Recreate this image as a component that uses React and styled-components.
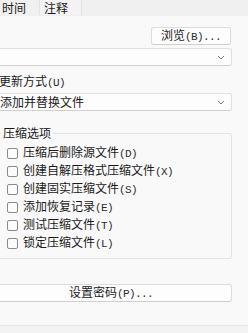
import styled, { createGlobalStyle } from "styled-components";

const GlobalStyle = createGlobalStyle`
  html, body {
    margin: 0;
    padding: 0;
    background: #f9f9f9;
  }
  body {
    width: 248px;
    height: 333px;
    overflow: hidden;
    font-family: "Noto Sans CJK SC", "Liberation Sans", sans-serif;
    font-size: 12px;
    color: #1a1a1a;
  }
`;

const Page = styled.div`
  width: 248px;
  height: 333px;
  display: flex;
  flex-direction: column;
  overflow: hidden;
`;

const TabBar = styled.div`
  height: 15px;
  display: flex;
  background: #f0f0f0;
  border-bottom: 1px solid #f0f0f0;
`;

const Tab = styled.div`
  width: ${({ w }) => w}px;
  line-height: 15px;
  padding-left: ${({ pl }) => pl}px;
  box-sizing: border-box;
  border-right: 1px solid #e3e3e3;
  background: ${({ active }) => (active ? "#f3f3f3" : "#f0f0f0")};
  font-size: 12px;
`;

const Body = styled.div`
  flex: 1;
  display: flex;
  flex-direction: column;
  padding: 11px 16px 0 0;
`;

const ButtonRow = styled.div`
  display: flex;
  justify-content: flex-end;
  padding-right: 1px;
`;

const Button = styled.div`
  height: 18px;
  width: ${({ w }) => (w ? `${w}px` : "auto")};
  box-sizing: border-box;
  background: #fdfdfd;
  border: 1px solid #dcdcdc;
  border-bottom-color: #cfcfcf;
  border-radius: 3px;
  display: flex;
  align-items: center;
  justify-content: center;
  font-size: 12px;
  line-height: 16px;
  white-space: pre;
`;

const Text = styled.span`
  line-height: 16px;
  white-space: pre;
`;

const Lat = styled.span`
  font-family: "Liberation Mono", monospace;
  font-size: 11px;
  letter-spacing: -0.6px;
  color: #2a2a2a;
`;

const Combo = styled.div`
  height: 18px;
  margin-left: -10px;
  box-sizing: border-box;
  background: #fdfdfd;
  border: 1px solid #e0e0e0;
  border-bottom-color: #d0d0d0;
  border-radius: 3px;
  display: flex;
  align-items: center;
  padding-left: 9px;
  padding-right: 6px;
  font-size: 12px;
  line-height: 16px;
`;

const ComboText = styled.span`
  flex: 1;
`;

const Label = styled.div`
  margin-left: -1px;
  line-height: 16px;
  font-size: 12px;
`;

const Group = styled.fieldset`
  margin: 0 0 0 -10px;
  padding: 6px 0 8px 16px;
  border: 1px solid #e3e3e3;
  border-radius: 3px;
  display: flex;
  flex-direction: column;
  gap: 4px;
`;

const Legend = styled.legend`
  padding: 0 2px;
  margin-left: -6px;
  font-size: 12px;
  line-height: 14px;
`;

const CheckRow = styled.div`
  display: flex;
  align-items: center;
  height: 14px;
  font-size: 12px;
  white-space: nowrap;
`;

const Box = styled.span`
  width: 11px;
  height: 11px;
  margin-right: 5px;
  box-sizing: border-box;
  border: 1px solid #8a8a8a;
  border-radius: 2px;
  background: #fbfbfb;
  flex: none;
`;

const Footer = styled.div`
  margin-top: auto;
  height: 7px;
  background: #f3f3f3;
  border-top: 1px solid #e8e8e8;
`;

const Chevron = () => (
  <svg width="8" height="5" viewBox="0 0 8 5">
    <path d="M1 1l3 3 3-3" fill="none" stroke="#7a7a7a" strokeWidth="1" />
  </svg>
);

const options = [
  ["压缩后删除源文件", "(D)"],
  ["创建自解压格式压缩文件", "(X)"],
  ["创建固实压缩文件", "(S)"],
  ["添加恢复记录", "(E)"],
  ["测试压缩文件", "(T)"],
  ["锁定压缩文件", "(L)"],
];

const App = () => {
  return (
    <Page>
      <GlobalStyle />
      <TabBar>
        <Tab w={40} pl={2}>时间</Tab>
        <Tab w={42} pl={4} active>注释</Tab>
      </TabBar>
      <Body>
        <ButtonRow>
          <Button w={80}>
            <Text>浏览<Lat>(B)...</Lat></Text>
          </Button>
        </ButtonRow>
        <Combo style={{ marginTop: 3 }}>
          <ComboText></ComboText>
          <Chevron />
        </Combo>
        <Label style={{ marginTop: 7 }}>更新方式<Lat>(U)</Lat></Label>
        <Combo style={{ marginTop: 2 }}>
          <ComboText>添加并替换文件</ComboText>
          <Chevron />
        </Combo>
        <Group style={{ marginTop: 15 }}>
          <Legend>压缩选项</Legend>
          {options.map(([t, k]) => (
            <CheckRow key={t}>
              <Box />
              <Text>{t}<Lat>{k}</Lat></Text>
            </CheckRow>
          ))}
        </Group>
        <Button style={{ marginTop: 25, marginLeft: -10 }}>
          <Text>设置密码<Lat>(P)...</Lat></Text>
        </Button>
      </Body>
      <Footer />
    </Page>
  );
};

export default App;
